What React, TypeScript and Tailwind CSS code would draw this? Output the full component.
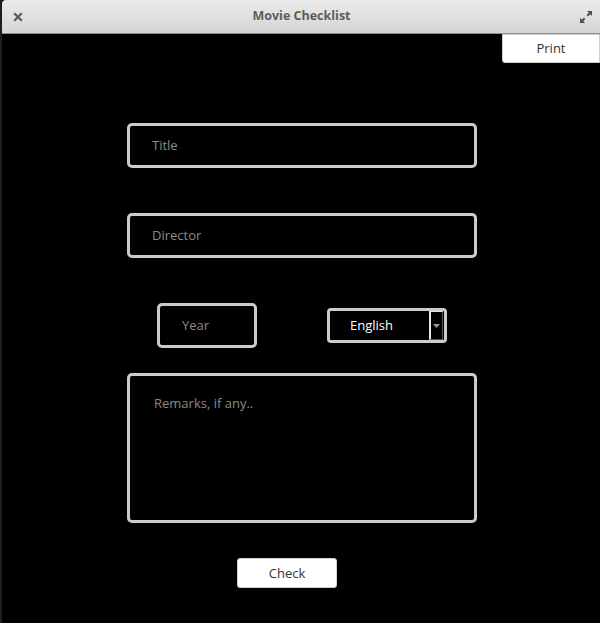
import React from 'react';

/**
 * Movie Checklist window
 * Title bar, a print action and a small entry form
 */
export default function App() {
  const font = { fontFamily: '"Open Sans", "Noto Sans", sans-serif' };

  return (
    <div className="w-[600px] h-[623px] flex bg-[#15191d] overflow-hidden" style={font}>
      {/* Desktop peeking at the left edge */}
      <div className="w-[2px] shrink-0 bg-[#1b2027]" />

      <div className="flex-1 flex flex-col bg-black">
        {/* Title bar */}
        <div className="h-[34px] shrink-0 flex items-center justify-between px-[11px] rounded-tl-[4px] bg-gradient-to-b from-[#ebebeb] to-[#d5d5d5] border-b border-[#8e8e8e]">
          <svg className="w-[10px] h-[10px]" viewBox="0 0 10 10">
            <path d="M2 2L8 8M8 2L2 8" stroke="#5a5a5a" strokeWidth={2.2} strokeLinecap="square" />
          </svg>
          <span className="text-[12.5px] font-bold text-[#5c5c5c]">Movie Checklist</span>
          <svg className="w-[12px] h-[12px] mr-[-3px]" viewBox="0 0 12 12" fill="#4f4f4f">
            <path d="M7 0H12V5L10.2 3.2L8 5.4L6.6 4L8.8 1.8Z" />
            <path d="M0 12V7L1.8 8.8L4 6.6L5.4 8L3.2 10.2L5 12Z" />
          </svg>
        </div>

        {/* Content */}
        <div className="flex-1 flex flex-col">
          <button className="self-end w-[98px] h-[29px] bg-white rounded-bl-[3px] border border-[#d0d0d0] text-[13px] text-[#333]">
            Print
          </button>

          <div className="w-[350px] ml-[125px] mt-[60px] flex flex-col">
            <div className="h-[45px] border-[3px] border-[#cbcbcb] rounded-[5px] flex items-center pl-[22px] pt-[1px] text-[13px] text-[#8a8a8a]">
              Title
            </div>

            <div className="h-[45px] mt-[45px] border-[3px] border-[#cbcbcb] rounded-[5px] flex items-center pl-[22px] pt-[1px] text-[13px] text-[#8a8a8a]">
              Director
            </div>

            <div className="mt-[45px] flex items-center justify-between px-[30px]">
              <div className="w-[100px] h-[45px] border-[3px] border-[#cbcbcb] rounded-[5px] flex items-center pl-[22px] pt-[1px] text-[13px] text-[#8a8a8a]">
                Year
              </div>
              <div className="w-[120px] h-[35px] border-[3px] border-[#cbcbcb] rounded-[4px] flex items-center justify-between pl-[20px] pr-[1px] text-[13px] text-white">
                <span className="pt-[1px]">English</span>
                <div className="w-[14px] h-[29px] border-l-2 border-t border-[#e6e6e6] border-r border-b border-r-[#555] border-b-[#555] bg-black flex items-center justify-center">
                  <svg className="w-[7px] h-[4px]" viewBox="0 0 7 4">
                    <path d="M0 0H7L3.5 4Z" fill="#9a9a9a" />
                  </svg>
                </div>
              </div>
            </div>

            <div className="h-[150px] mt-[25px] border-[3px] border-[#cbcbcb] rounded-[5px] pl-[24px] pt-[18px] text-[13px] text-[#8a8a8a]">
              Remarks, if any..
            </div>

            <button className="ml-[110px] mt-[35px] w-[100px] h-[30px] pt-[1px] bg-white rounded-[3px] border border-[#d0d0d0] text-[13px] text-[#333]">
              Check
            </button>
          </div>
        </div>
      </div>
    </div>
  );
}
